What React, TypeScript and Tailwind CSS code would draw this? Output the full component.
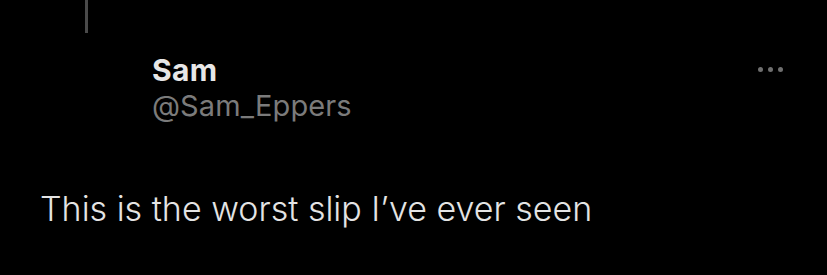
export default function App() {
    return (
        <div className="w-[827px] h-[275px] bg-black overflow-hidden flex flex-col" style={{ fontFamily: 'Inter, "Noto Sans", sans-serif' }}>
            <div className="ml-[85px] w-[3px] h-[33px] bg-[#4a4a4a]" />
            <div className="flex justify-between items-start pl-[152px] pr-[44px] mt-[19px]">
                <div className="flex flex-col">
                    <span className="text-[30px] leading-[36px] font-bold text-[#e7e7e7] tracking-[0.3px]">Sam</span>
                    <span className="text-[29px] leading-[36px] text-[#7b7b7b] tracking-[0.1px]">@Sam_Eppers</span>
                </div>
                <div className="flex gap-[5px] mt-[15px]">
                    <span className="w-[5px] h-[5px] rounded-full bg-[#6f6f6f]" />
                    <span className="w-[5px] h-[5px] rounded-full bg-[#6f6f6f]" />
                    <span className="w-[5px] h-[5px] rounded-full bg-[#6f6f6f]" />
                </div>
            </div>
            <p className="pl-[40px] mt-[65px] text-[34px] leading-[40px] font-light text-[#e4e4e4]">This is the worst slip I’ve ever seen</p>
        </div>
    )
}
